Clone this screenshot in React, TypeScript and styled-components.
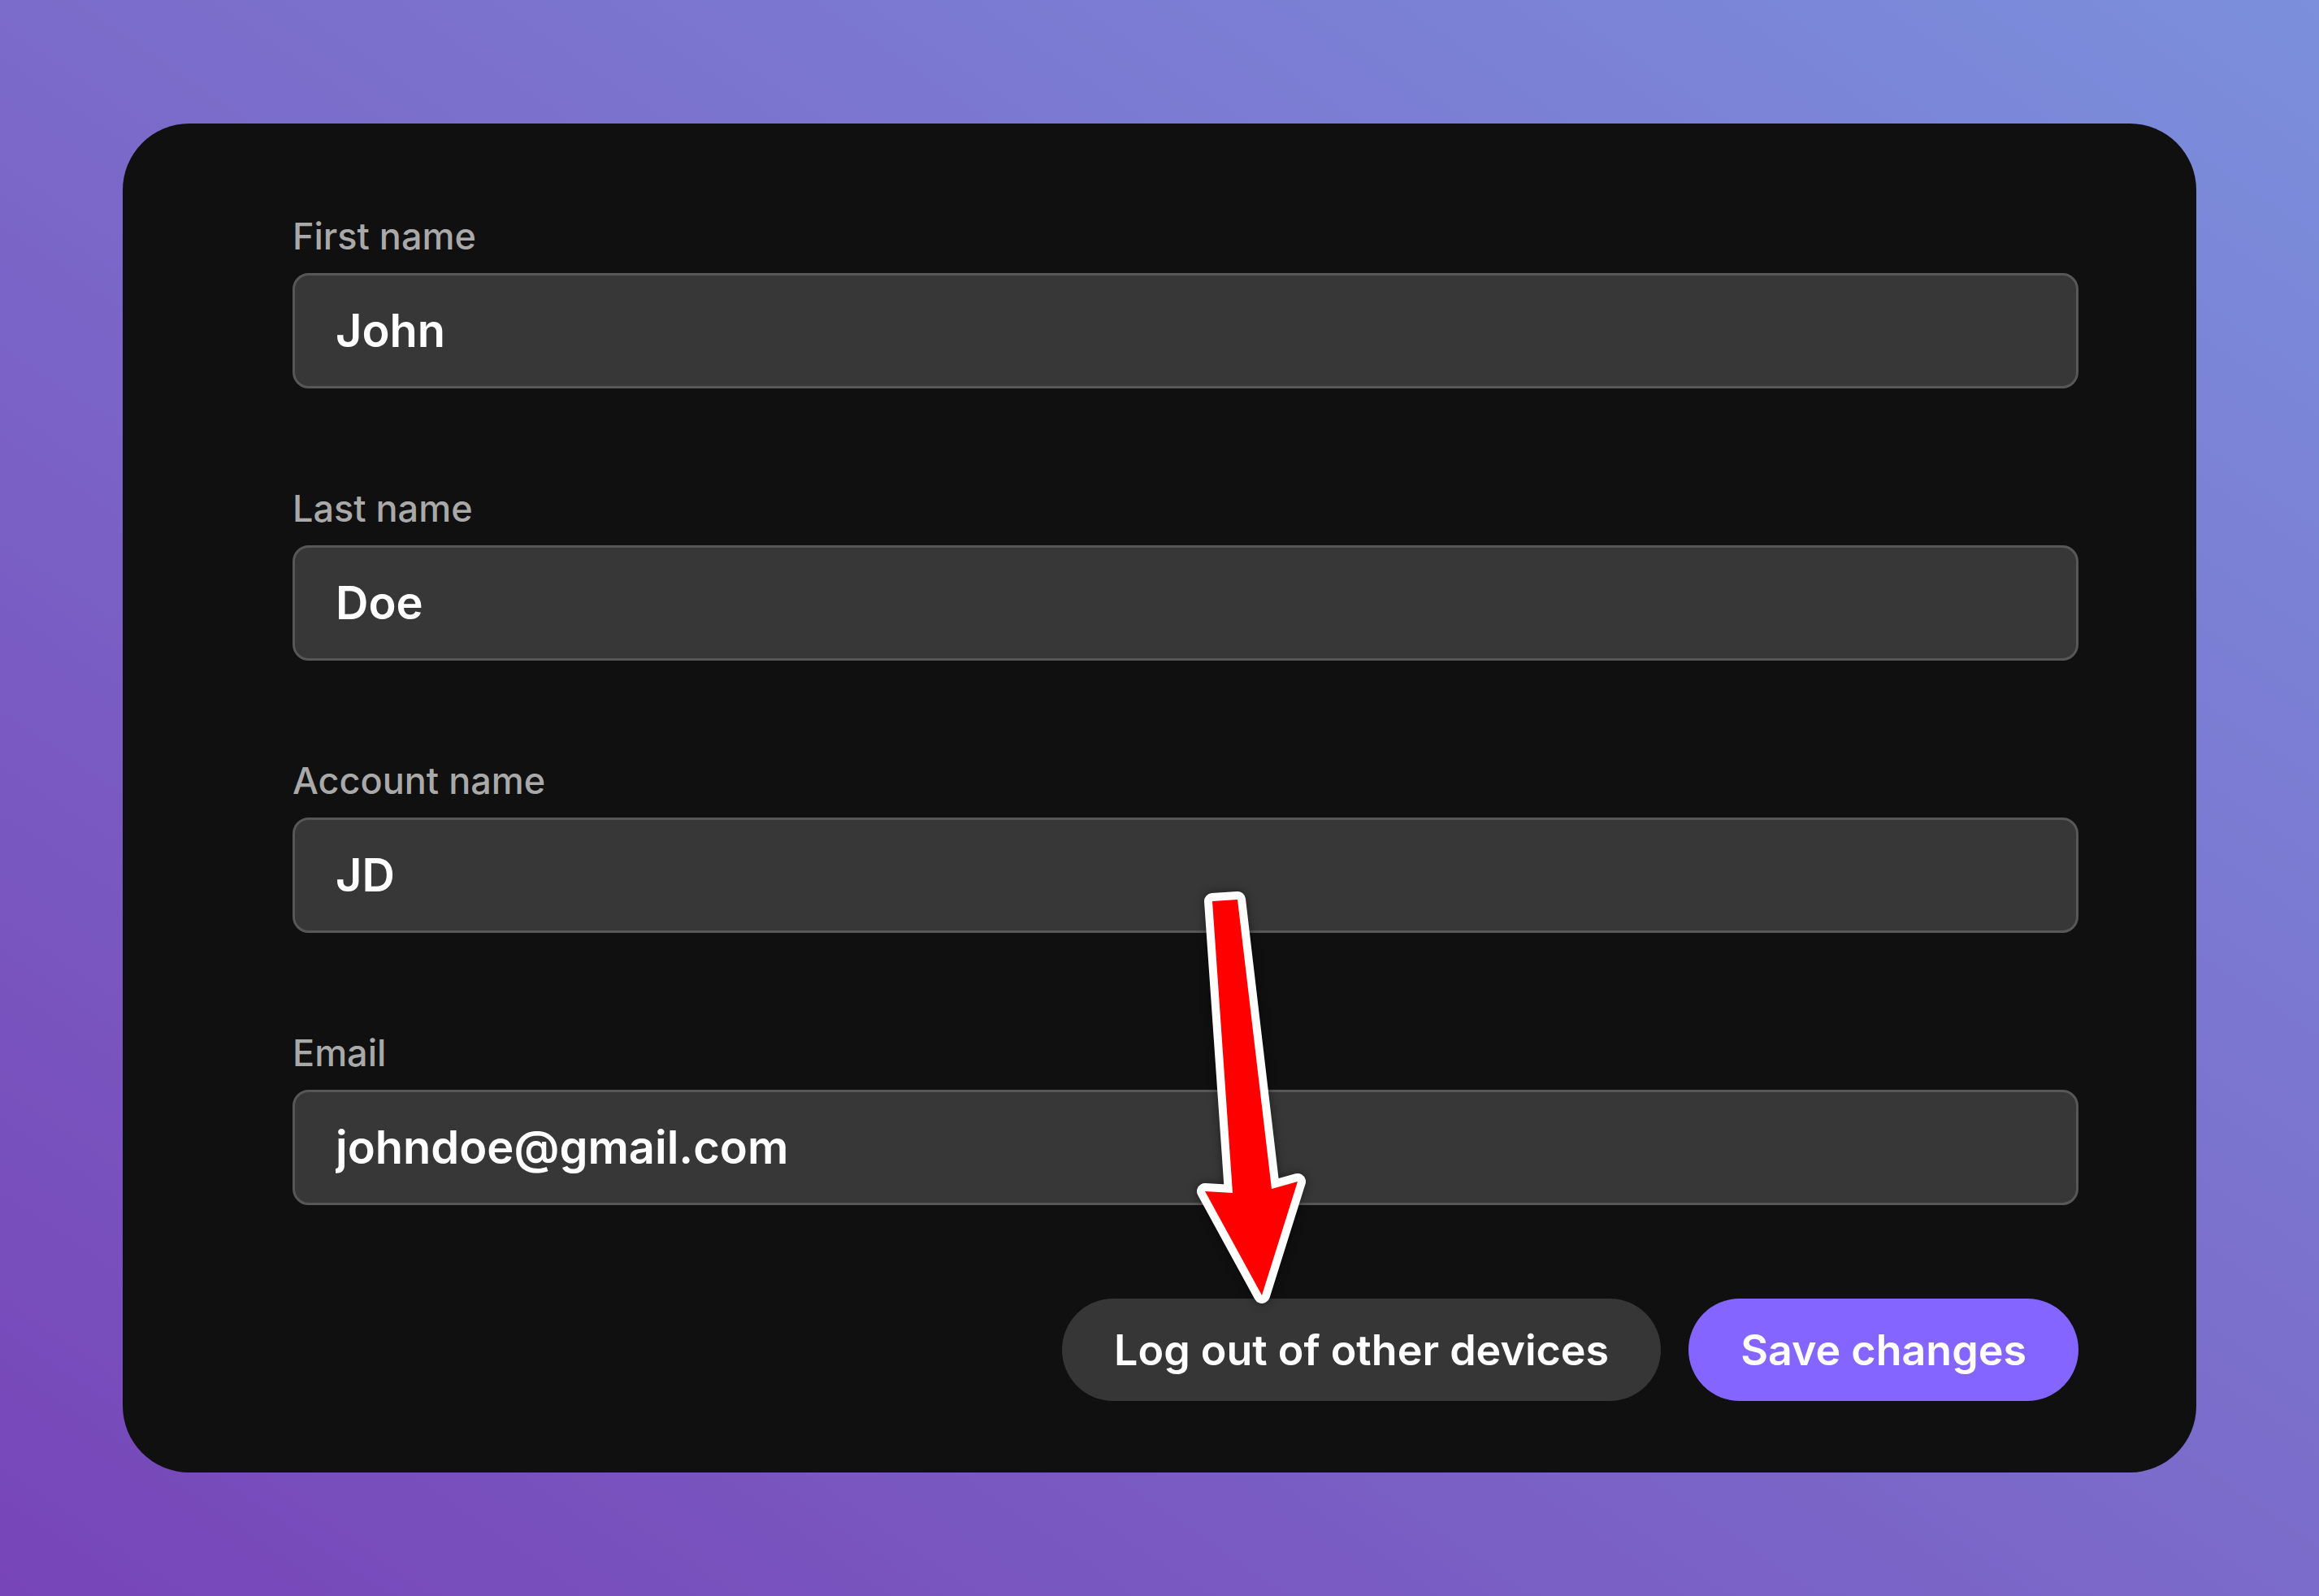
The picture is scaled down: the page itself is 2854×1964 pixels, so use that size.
import React from "react";
import styled, { createGlobalStyle } from "styled-components";

const GlobalStyle = createGlobalStyle`
  html, body {
    margin: 0;
    padding: 0;
  }
  body {
    width: 2854px;
    height: 1964px;
    overflow: hidden;
    background: linear-gradient(to top right, #7745b8 0%, #7b6bca 50%, #7b8fdc 100%);
    font-family: "Inter", "Noto Sans", "Liberation Sans", sans-serif;
  }
  * { box-sizing: border-box; }
`;

const Page = styled.div`
  width: 2854px;
  height: 1964px;
  display: flex;
  align-items: center;
  justify-content: center;
`;

const Card = styled.div`
  position: relative;
  width: 2552px;
  height: 1660px;
  background: #101010;
  border-radius: 82px;
  padding: 116px 145px 88px 209px;
  display: flex;
  flex-direction: column;
`;

const Fields = styled.div`
  display: flex;
  flex-direction: column;
  gap: 125px;
`;

const Field = styled.label`
  display: flex;
  flex-direction: column;
  gap: 23px;
`;

const LabelText = styled.span`
  font-size: 45px;
  line-height: 45px;
  font-weight: 500;
  color: #a9a9a9;
`;

const Input = styled.input`
  height: 142px;
  width: 100%;
  background: #373737;
  border: 3px solid #575757;
  border-radius: 20px;
  padding: 0 50px;
  font-family: "Inter", "Noto Sans", "Liberation Sans", sans-serif;
  font-size: 56px;
  font-weight: 600;
  color: #ffffff;
  outline: none;
`;

const Actions = styled.div`
  margin-top: 115px;
  display: flex;
  justify-content: flex-end;
  gap: 34px;
`;

const Button = styled.button<{ $primary?: boolean }>`
  height: 126px;
  padding: 0 64px;
  border: none;
  border-radius: 63px;
  background: ${(p) => (p.$primary ? "#8465ff" : "#363636")};
  color: #ffffff;
  font-family: "Inter", "Noto Sans", "Liberation Sans", sans-serif;
  font-size: 52px;
  font-weight: 600;
  cursor: pointer;
`;

const Arrow = styled.svg`
  position: absolute;
  left: 1309px;
  top: 934px;
  width: 160px;
  height: 535px;
  overflow: visible;
  filter: drop-shadow(0 0 6px rgba(0, 0, 0, 0.45));
`;

const fields = [
  { label: "First name", value: "John" },
  { label: "Last name", value: "Doe" },
  { label: "Account name", value: "JD" },
  { label: "Email", value: "johndoe@gmail.com" },
];

export default function App() {
  return (
    <>
      <GlobalStyle />
      <Page>
        <Card>
          <Fields>
            {fields.map((f) => (
              <Field key={f.label}>
                <LabelText>{f.label}</LabelText>
                <Input defaultValue={f.value} />
              </Field>
            ))}
          </Fields>
          <Actions>
            <Button>Log out of other devices</Button>
            <Button $primary>Save changes</Button>
          </Actions>
          <Arrow viewBox="0 0 160 535">
            <polygon
              points="32,23 63,21 105,377 137,368 93,508 23,380 57,382"
              fill="#ff0000"
              stroke="#ffffff"
              strokeWidth={20}
              strokeLinejoin="round"
              paintOrder="stroke fill"
            />
          </Arrow>
        </Card>
      </Page>
    </>
  );
}
